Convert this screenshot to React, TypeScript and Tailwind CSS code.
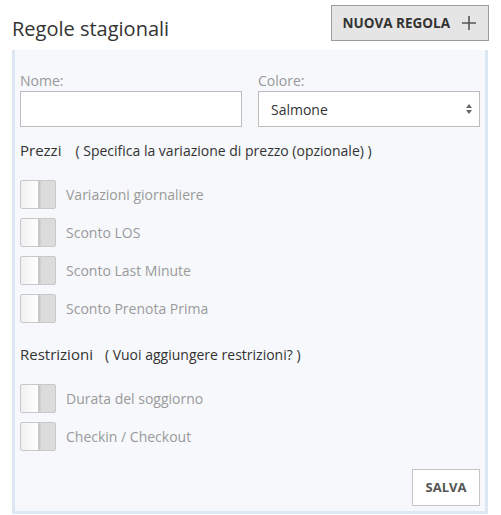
import React from "react";

function Toggle({ label }: { label: string }) {
  return (
    <div className="flex items-center h-[28px]">
      <div className="flex w-[36px] h-[29px] border border-[#c8c8c8] rounded-[2px] overflow-hidden bg-[#dcdcdc]">
        <div className="w-[18px] h-full bg-gradient-to-r from-[#f0f0f0] to-white border-r border-[#c8c8c8] shadow-[1px_0_2px_rgba(0,0,0,0.15)]"></div>
      </div>
      <span className="ml-[10px] text-[14px] text-[#9a9a9a]">{label}</span>
    </div>
  );
}

export default function App() {
  return (
    <div
      className="w-[501px] h-[515px] bg-white overflow-hidden"
      style={{ fontFamily: '"Open Sans", "Liberation Sans", sans-serif' }}
    >
      <div className="flex items-start justify-between pl-[12px] pr-[12px] pt-[5px] h-[50px]">
        <h1 className="mt-[10px] text-[20px] leading-[28px] text-[#333]">Regole stagionali</h1>
        <button className="flex items-center h-[36px] pl-[11px] pr-[11px] bg-[#e5e5e5] border border-[#9c9c9c] text-[13.5px] font-bold text-[#333]">
          NUOVA REGOLA
          <svg width="16" height="16" viewBox="0 0 16 16" className="ml-[11px]">
            <path d="M8 1v14M1 8h14" stroke="#555" strokeWidth="1.6" fill="none" />
          </svg>
        </button>
      </div>
      <div className="ml-[12px] mr-[13px] h-[464px] bg-[#f6f8fb] border-l-[3px] border-r-[3px] border-b-[3px] border-[#dbe7f2] pl-[5px] pr-[5px] pt-[21px]">
        <div className="flex gap-[16px]">
          <div className="flex-1">
            <div className="text-[14px] leading-[20px] text-[#999]">Nome:</div>
            <input className="w-full h-[36px] bg-white border border-[#bdbdbd] outline-none" />
          </div>
          <div className="flex-1">
            <div className="text-[14px] leading-[20px] text-[#999]">Colore:</div>
            <div className="flex items-center justify-between h-[36px] bg-white border border-[#bdbdbd] pl-[12px] pr-[6px] text-[14px] text-[#333]">
              Salmone
              <svg width="8" height="12" viewBox="0 0 8 12">
                <path d="M4 1 L7 5 H1 Z M4 11 L7 7 H1 Z" fill="#666" />
              </svg>
            </div>
          </div>
        </div>
        <div className="mt-[12px] flex items-baseline text-[#333]">
          <span className="text-[15px]">Prezzi</span>
          <span className="ml-[14px] text-[14px]">( Specifica la variazione di prezzo (opzionale) )</span>
        </div>
        <div className="mt-[19px] flex flex-col gap-[10px]">
          <Toggle label="Variazioni giornaliere" />
          <Toggle label="Sconto LOS" />
          <Toggle label="Sconto Last Minute" />
          <Toggle label="Sconto Prenota Prima" />
        </div>
        <div className="mt-[20px] flex items-baseline text-[#333]">
          <span className="text-[15px]">Restrizioni</span>
          <span className="ml-[12px] text-[14px]">( Vuoi aggiungere restrizioni? )</span>
        </div>
        <div className="mt-[19px] flex flex-col gap-[10px]">
          <Toggle label="Durata del soggiorno" />
          <Toggle label="Checkin / Checkout" />
        </div>
        <div className="mt-[19px] flex justify-end">
          <button className="h-[37px] w-[68px] bg-white border border-[#c4c4c4] text-[13px] font-bold text-[#555]">
            SALVA
          </button>
        </div>
      </div>
    </div>
  );
}
